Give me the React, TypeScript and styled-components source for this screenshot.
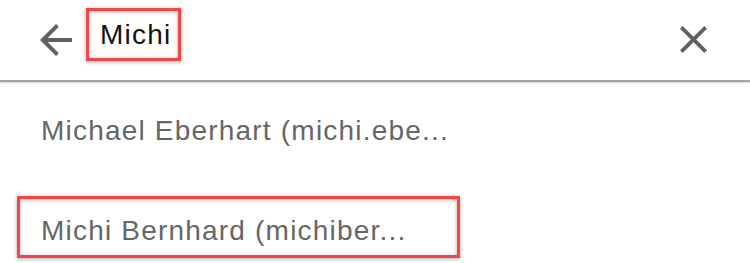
import { ReactElement } from 'react'
import styled, { createGlobalStyle, css } from 'styled-components'

const GlobalStyle = createGlobalStyle`
  html, body {
    margin: 0;
    padding: 0;
    background: #fff;
    font-family: 'Liberation Sans', Arial, sans-serif;
  }
`

const Screen = styled.div`
  width: 750px;
  height: 263px;
  overflow: hidden;
  background: #fff;
`

const SearchBar = styled.header`
  height: 80px;
  display: flex;
  align-items: center;
  padding: 0 43px 0 40px;
  border-bottom: 2px solid #a3a3a3;
  box-shadow: 0 1px 2px rgba(0, 0, 0, 0.18);
`

const IconButton = styled.button`
  display: flex;
  align-items: center;
  justify-content: center;
  padding: 0;
  border: 0;
  background: none;
  color: #616161;
  cursor: pointer;
`

const CloseButton = styled(IconButton)`
  margin-left: auto;
  margin-top: -2px;
`

const highlight = css`
  border-color: #f0484a;
  box-shadow: 0 1px 4px rgba(0, 0, 0, 0.35), inset 0 1px 4px rgba(0, 0, 0, 0.3);
`

const QueryBox = styled.div<{ $marked?: boolean }>`
  box-sizing: border-box;
  width: 95px;
  height: 53px;
  margin-left: 14px;
  margin-top: -12px;
  padding: 1px 0 0 11px;
  display: flex;
  align-items: center;
  border: 3px solid transparent;
  font-size: 28px;
  letter-spacing: 1.2px;
  color: #111;
  ${(p) => p.$marked && highlight}
`

const ResultList = styled.ul`
  list-style: none;
  margin: 0;
  padding: 0;
`

const ResultRow = styled.li`
  height: 100px;
  padding: 14px 0 0 17px;
  box-sizing: border-box;
`

const ResultLabel = styled.div<{ $marked?: boolean }>`
  box-sizing: border-box;
  width: 443px;
  height: 62px;
  padding: 8px 0 0 21px;
  display: flex;
  align-items: center;
  border: 3px solid transparent;
  font-size: 28px;
  letter-spacing: 1.2px;
  color: #666;
  white-space: nowrap;
  ${(p) => p.$marked && highlight}
`

const BackIcon = () => (
  <svg width='32' height='32' viewBox='4 4 16 16' fill='currentColor'>
    <path d='M20 11H7.83l5.59-5.59L12 4l-8 8 8 8 1.41-1.41L7.83 13H20v-2z' />
  </svg>
)

const CloseIcon = () => (
  <svg width='27' height='27' viewBox='5 5 14 14' fill='currentColor'>
    <path d='M19 6.41L17.59 5 12 10.59 6.41 5 5 6.41 10.59 12 5 17.59 6.41 19 12 13.41 17.59 19 19 17.59 13.41 12z' />
  </svg>
)

const results = [
  { id: 'r1', label: 'Michael Eberhart (michi.ebe...', marked: false },
  { id: 'r2', label: 'Michi Bernhard (michiber...', marked: true },
]

export default function App(): ReactElement {
  return (
    <>
      <GlobalStyle />
      <Screen>
        <SearchBar>
          <IconButton aria-label='Back'>
            <BackIcon />
          </IconButton>
          <QueryBox $marked>Michi</QueryBox>
          <CloseButton aria-label='Clear'>
            <CloseIcon />
          </CloseButton>
        </SearchBar>

        <ResultList>
          {results.map((r) => (
            <ResultRow key={r.id}>
              <ResultLabel $marked={r.marked}>{r.label}</ResultLabel>
            </ResultRow>
          ))}
        </ResultList>
      </Screen>
    </>
  )
}
